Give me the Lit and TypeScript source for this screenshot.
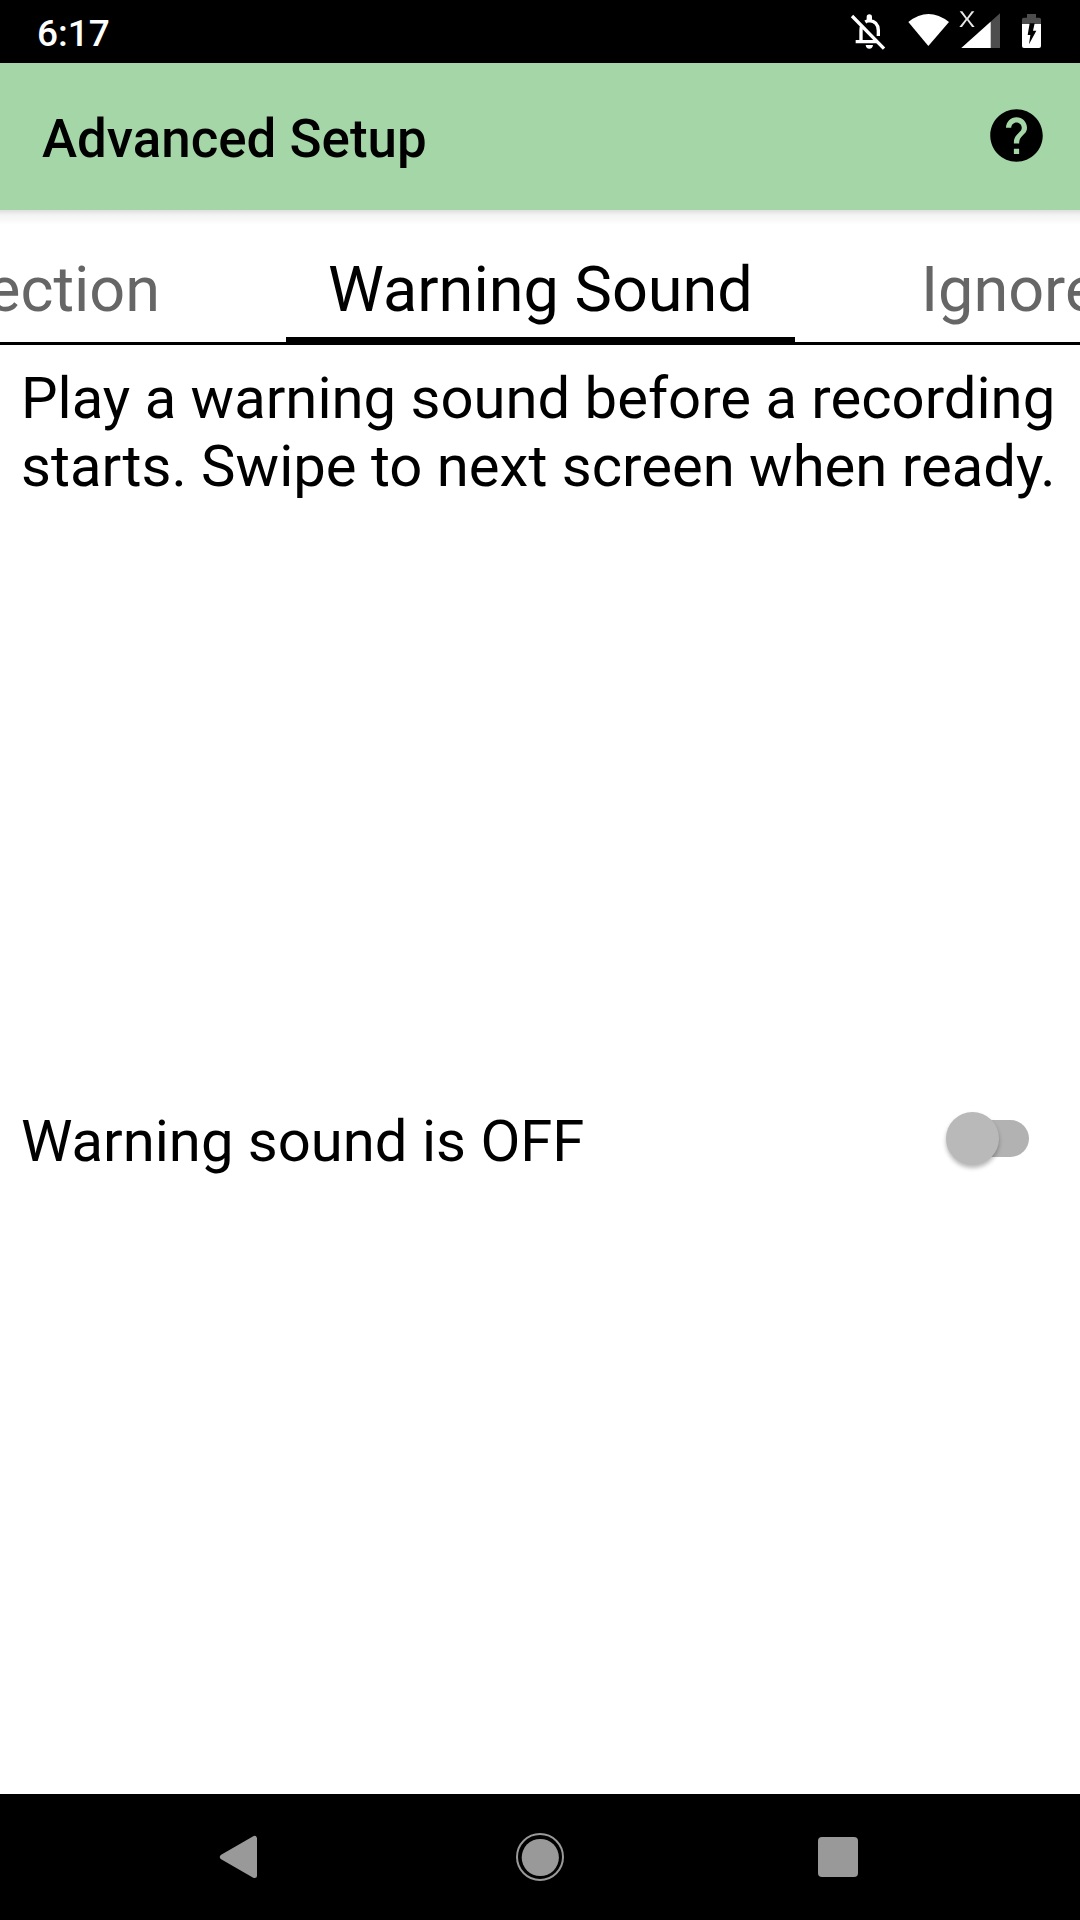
import { LitElement, html, css } from "lit";
import { customElement, property } from "lit/decorators.js";

@customElement("status-bar")
class StatusBar extends LitElement {
  static styles = css`
    :host { display: flex; height: 63px; background: #000; color: #fff; justify-content: space-between; }
    .time { padding-left: 37px; font-size: 37px; font-weight: 500; line-height: 67px; }
    svg { display: block; flex: none; }
  `;
  render() {
    return html`
      <span class="time">6:17</span>
      <svg width="240" height="63" viewBox="0 0 720 189">
        <g fill="none" stroke="#fff" stroke-width="10">
          <path d="M36 48L132 146" />
          <path d="M47 125H113M63 122V91Q63 81 67 75M76 66Q82 62 88 62Q114 64 115 91V108" />
        </g>
        <path d="M80 60V51Q80 43 88 43Q96 43 96 51V60ZM77 135H99Q98 146 88 146Q78 146 77 135Z" fill="#fff" />
        <path d="M205 66Q265 18 327 66L265 138Z" fill="#fff" />
        <path d="M364 144L480 40V144Z" fill="#4d4d4d" />
        <path d="M364 144L452 65V144Z" fill="#fff" />
        <path d="M359 34H367L381 53L395 34H403L385 57L404 81H396L381 61L366 81H358L377 57Z" fill="#e8e8e8" />
        <path d="M546 74V58Q546 53 551 53H561V42H588V53H598Q603 53 603 58V74Z" fill="#4d4d4d" />
        <path d="M546 72H603V138Q603 144 597 144H552Q546 144 546 138Z" fill="#fff" />
        <path d="M569 70H584L579 92H589L567 133L571 105H563Z" fill="#000" />
      </svg>
    `;
  }
}

@customElement("app-bar")
class AppBar extends LitElement {
  static styles = css`
    :host {
      display: flex; align-items: center; justify-content: space-between; height: 147px;
      box-sizing: border-box; padding: 0 32px 0 42px; background: #a5d6a7;
    }
    .title { font-size: 52.9px; font-weight: 500; line-height: 62px; padding-top: 5px; }
    svg { display: block; margin-bottom: 2px; }
  `;
  render() {
    return html`
      <span class="title">Advanced Setup</span>
      <svg width="63" height="63" viewBox="0 0 24 24">
        <path d="M12 2C6.48 2 2 6.48 2 12s4.48 10 10 10 10-4.48 10-10S17.52 2 12 2zm1 17h-2v-2h2v2zm2.07-7.75l-.9.92C13.45 12.9 13 13.5 13 15h-2v-.5c0-1.1.45-2.1 1.17-2.83l1.24-1.26c.37-.36.59-.86.59-1.41 0-1.1-.9-2-2-2s-2 .9-2 2H8c0-2.21 1.79-4 4-4s4 1.79 4 4c0 .88-.36 1.68-.93 2.25z" />
      </svg>
    `;
  }
}

@customElement("tab-strip")
class TabStrip extends LitElement {
  static styles = css`
    :host {
      display: grid; grid-template-columns: minmax(0, 1fr) auto minmax(0, 1fr); column-gap: 126px;
      height: 135px; box-sizing: border-box; border-bottom: 3px solid #000; padding-left: 1px;
      background: linear-gradient(#dedede, #f3f3f3 5px, #fff 15px);
      font-size: 63px; line-height: 73px; white-space: nowrap; overflow: hidden;
    }
    .tab { padding-top: 43px; color: #666; display: flex; min-width: 0; }
    .previous { justify-content: flex-end; }
    .current { color: #000; padding-left: 42px; padding-right: 42px; border-bottom: 5px solid #000; }
  `;
  render() {
    return html`
      <div class="tab previous">Detection</div>
      <div class="tab current">Warning Sound</div>
      <div class="tab">Ignore</div>
    `;
  }
}

@customElement("toggle-switch")
class ToggleSwitch extends LitElement {
  static styles = css`
    :host { display: flex; align-items: center; width: 77px; height: 37px; border-radius: 19px; background: #b2b2b2; }
    .thumb {
      flex: none; width: 53px; height: 53px; margin-left: -6px; border-radius: 50%; background: #b9b9b9;
      box-shadow: 0 3px 4px rgba(0, 0, 0, 0.28);
    }
  `;
  render() {
    return html`<div class="thumb"></div>`;
  }
}

@customElement("setting-row")
class SettingRow extends LitElement {
  @property() label = "";
  static styles = css`
    :host { display: flex; align-items: center; justify-content: space-between; padding: 0 51px 0 21px; }
    .label { line-height: 68px; padding-top: 5px; }
  `;
  render() {
    return html`<span class="label">${this.label}</span><toggle-switch></toggle-switch>`;
  }
}

@customElement("nav-bar")
class NavBar extends LitElement {
  static styles = css`
    :host { display: flex; justify-content: center; height: 126px; background: #000; }
    svg { display: block; fill: #999; }
    .ring { fill: none; stroke: #999; stroke-width: 2; }
    .back { stroke: #999; stroke-width: 5; stroke-linejoin: round; }
  `;
  render() {
    return html`
      <svg width="300" height="126"><path class="back" d="M132.4 63L164.5 44.4V81.6Z" /></svg>
      <svg width="300" height="126"><circle class="ring" cx="150" cy="63" r="23" /><circle cx="150.3" cy="63.5" r="18.6" /></svg>
      <svg width="300" height="126"><rect x="128" y="43" width="40" height="40" rx="4" /></svg>
    `;
  }
}

@customElement("app-root")
class AppRoot extends LitElement {
  static styles = css`
    :host {
      display: flex; flex-direction: column; width: 1080px; height: 1920px; overflow: hidden;
      background: #fff; color: #000; font-family: Roboto, sans-serif; font-size: 58px;
    }
    status-bar, app-bar, tab-strip, nav-bar, setting-row { flex: none; }
    .content { flex: 1; display: flex; flex-direction: column; }
    .description {
      margin: 0; padding: 19px 0 0 21px; box-sizing: border-box; height: 757px;
      line-height: 68px; white-space: nowrap;
    }
  `;
  render() {
    return html`
      <status-bar></status-bar>
      <app-bar></app-bar>
      <tab-strip></tab-strip>
      <div class="content">
        <p class="description">Play a warning sound before a recording<br />starts. Swipe to next screen when ready.</p>
        <setting-row .label=${"Warning sound is OFF"}></setting-row>
      </div>
      <nav-bar></nav-bar>
    `;
  }
}
